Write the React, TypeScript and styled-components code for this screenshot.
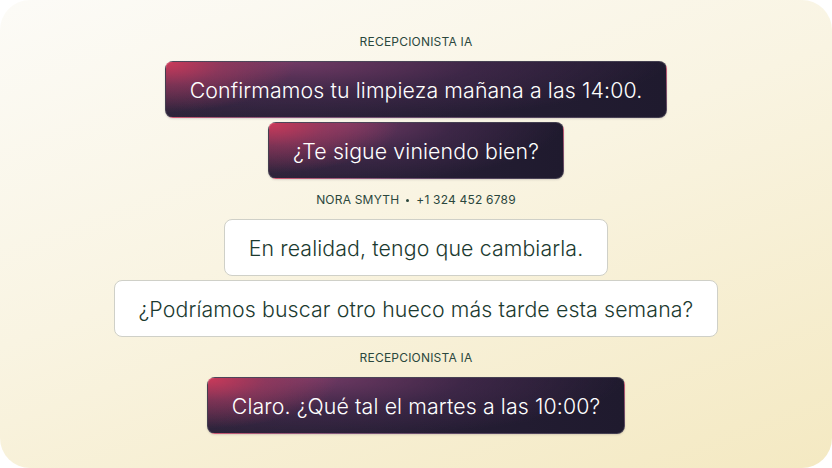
import React from "react";
import styled, { createGlobalStyle } from "styled-components";

const Global = createGlobalStyle`
  html, body { margin: 0; padding: 0; background: #ffffff; }
  body { width: 832px; height: 468px; overflow: hidden; }
`;

const Card = styled.div`
  width: 832px;
  height: 468px;
  box-sizing: border-box;
  border-radius: 30px;
  background: linear-gradient(160deg, #fcfbf7 0%, #f9f4e2 45%, #f4e9c2 100%);
  display: flex;
  flex-direction: column;
  align-items: center;
  padding-top: 34px;
  font-family: Inter, "Noto Sans", sans-serif;
`;

const Label = styled.div<{ $top?: number }>`
  height: 16px;
  font-size: 12px;
  line-height: 16px;
  color: #2b473d;
  letter-spacing: 0.2px;
  display: flex;
  align-items: center;
  gap: 7px;
  margin: ${(p) => p.$top ?? 0}px 0 11px;
`;

const Dot = styled.span`
  width: 3px;
  height: 3px;
  border-radius: 50%;
  background: #2b473d;
`;

const Stack = styled.div`
  display: flex;
  flex-direction: column;
  align-items: center;
  gap: 4px;
`;

const Bubble = styled.div<{ $ai?: boolean }>`
  height: 57px;
  box-sizing: border-box;
  padding: 0 24px;
  border-radius: 8px;
  display: flex;
  align-items: center;
  font-size: 21.3px;
  font-weight: 300;
  letter-spacing: 0.12px;
  white-space: nowrap;
  ${(p) =>
    p.$ai
      ? `
    color: #ffffff;
    background:
      radial-gradient(ellipse 130px 50px at 0% 0%, rgba(210,58,90,0.95) 0%, rgba(185,60,95,0.5) 45%, rgba(150,55,100,0) 100%),
      radial-gradient(ellipse 75% 110% at 25% 0%, rgba(125,62,108,0.85) 0%, rgba(95,52,98,0.42) 50%, rgba(60,40,80,0) 100%),
      linear-gradient(90deg, #2a2238 0%, #241d33 60%, #1f1a2e 100%);
    border: 1px solid rgba(255,255,255,0.16);
    box-shadow: 0 1px 2px rgba(40,30,50,0.15);
  `
      : `
    color: #1c3a30;
    background: #ffffff;
    border: 1px solid #cfd0c8;
  `}
`;

export default function App() {
  return (
    <>
      <Global />
      <Card>
        <Label>RECEPCIONISTA IA</Label>
        <Stack>
          <Bubble $ai>Confirmamos tu limpieza mañana a las 14:00.</Bubble>
          <Bubble $ai>¿Te sigue viniendo bien?</Bubble>
        </Stack>
        <Label $top={13}>
          NORA SMYTH <Dot /> +1 324 452 6789
        </Label>
        <Stack>
          <Bubble>En realidad, tengo que cambiarla.</Bubble>
          <Bubble>¿Podríamos buscar otro hueco más tarde esta semana?</Bubble>
        </Stack>
        <Label $top={13}>RECEPCIONISTA IA</Label>
        <Stack>
          <Bubble $ai>Claro. ¿Qué tal el martes a las 10:00?</Bubble>
        </Stack>
      </Card>
    </>
  );
}
